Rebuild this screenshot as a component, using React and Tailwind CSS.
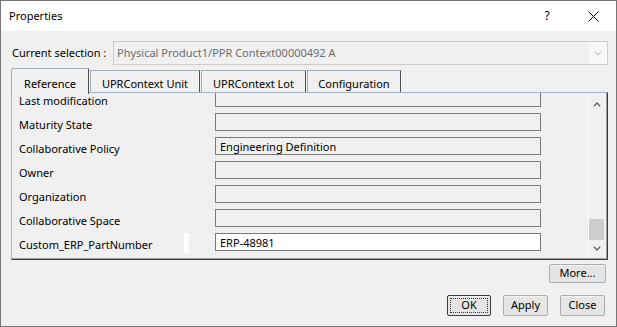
import React from "react";

const font = { fontFamily: '"Noto Sans", "Open Sans", sans-serif' };

function Chevron({ dir = "down", color = "#606060", w = 8, h = 5, sw = 1.3 }) {
  const d = dir === "down" ? "M0.8 0.8 L4 4 L7.2 0.8" : "M0.8 4.2 L4 1 L7.2 4.2";
  return (
    <svg width={w} height={h} viewBox="0 0 8 5" fill="none">
      <path d={d} stroke={color} strokeWidth={sw} />
    </svg>
  );
}

function Field({ value, white }) {
  return (
    <div
      className={
        "w-[326px] h-[18px] border border-[#7a7a7a] flex items-center pl-[4px] text-[11px] text-black leading-[15px] " +
        (white ? "bg-white" : "bg-[#f0f0f0]")
      }
    >
      {value}
    </div>
  );
}

function Row({ label, value, white, mark }) {
  return (
    <div className="flex items-start h-[24px] shrink-0">
      <div className="w-[172px] pl-[7px] pt-[4px] leading-[15px] text-[11px] text-black whitespace-nowrap">{label}</div>
      <div className="w-[5px] h-[20px]">{mark && <div className="w-[5px] h-[20px] bg-white" />}</div>
      <div className="w-[26px]" />
      <Field value={value} white={white} />
    </div>
  );
}

function Tab({ label, selected, w, first }) {
  return (
    <div
      className={
        "flex justify-center text-[11px] leading-[15px] text-black bg-[#f0f0f0] border-t border-l border-r border-t-[#a3aebb] border-l-[#a3aebb] border-r-[#505050] " +
        (selected ? "h-[26px] pt-[7px] relative z-10 rounded-tl-[2px] " : "h-[23px] pt-[5px] mt-[2px] ") +
        (first ? "" : "ml-[1px]")
      }
      style={{ width: w }}
    >
      {label}
    </div>
  );
}

function Button({ children, w, h, focused }) {
  return (
    <div
      className={
        "relative flex items-center justify-center text-[11px] text-black rounded-[2px] bg-[#e5e5e5] border " +
        (focused ? "border-[#3c3c3c]" : "border-[#adadad]")
      }
      style={{ width: w, height: h, boxShadow: "inset 0 1px 0 #f4f4f4" }}
    >
      {focused && <div className="absolute inset-[2px] border border-dotted border-[#333]" />}
      <span className="relative">{children}</span>
    </div>
  );
}

export default function App() {
  return (
    <div style={font} className="w-[617px] h-[327px] bg-[#f0f0f0] border border-[#767676] flex flex-col overflow-hidden">
      {/* Title bar */}
      <div className="h-[30px] bg-white flex items-center shrink-0">
        <div className="pl-[8px] text-[11px] text-black flex-1">Properties</div>
        <div className="w-[46px] h-full flex items-center justify-center text-[12px] text-black">?</div>
        <div className="w-[46px] h-full flex items-center justify-center">
          <svg width="11" height="11" viewBox="0 0 11 11">
            <path d="M0.5 0.5 L10.5 10.5 M10.5 0.5 L0.5 10.5" stroke="#000" strokeWidth="1" />
          </svg>
        </div>
      </div>

      <div className="flex flex-col pl-[10px] pr-[8px]">
        {/* Current selection */}
        <div className="flex items-center mt-[10px] h-[24px]">
          <div className="w-[102px] text-[11px] text-black pl-[1px] whitespace-nowrap">Current selection :</div>
          <div className="flex-1 h-[24px] border border-[#cccccc] bg-[#f0f0f0] flex items-stretch">
            <div className="flex-1 flex items-center pl-[3px] text-[11px] text-[#6d6d6d]">Physical Product1/PPR Context00000492 A</div>
            <div className="w-[18px] bg-[#f7f7f7] flex items-center justify-center">
              <Chevron dir="down" color="#a8a8a8" sw={1} />
            </div>
          </div>
        </div>

        {/* Tabs */}
        <div className="flex mt-[3px] h-[25px] items-start">
          <Tab label="Reference" selected w={78} first />
          <Tab label="UPRContext Unit" w={110} />
          <Tab label="UPRContext Lot" w={105} />
          <Tab label="Configuration" w={94} />
        </div>

        {/* Panel */}
        <div
          className="h-[168px] border border-t-[#a3b3c5] border-l-[#a3b3c5] border-b-[#3c3c3c] border-r-[#3c3c3c] flex -mt-[1px]"
          style={{ boxShadow: "inset -1px -1px 0 #a0a0a0" }}
        >
          <div className="flex-1 overflow-hidden">
            <div className="flex flex-col -mt-[4px]">
              <Row label="Last modification" value="" />
              <Row label="Maturity State" value="" />
              <Row label="Collaborative Policy" value="Engineering Definition" />
              <Row label="Owner" value="" />
              <Row label="Organization" value="" />
              <Row label="Collaborative Space" value="" />
              <Row label="Custom_ERP_PartNumber" value="ERP-48981" white mark />
            </div>
          </div>
          {/* Scrollbar */}
          <div className="w-[17px] mt-[3px] mb-[2px] mr-[2px] border-l border-white flex flex-col">
            <div className="h-[17px] flex items-center justify-center">
              <Chevron dir="up" />
            </div>
            <div className="flex-1 flex flex-col justify-end">
              <div className="h-[21px] bg-[#cdcdcd] mr-[1px]" />
            </div>
            <div className="h-[17px] flex items-center justify-center">
              <Chevron dir="down" />
            </div>
          </div>
        </div>

        {/* More */}
        <div className="flex justify-end mt-[4px] pr-[2px]">
          <Button w={57} h={19}>More...</Button>
        </div>

        {/* OK Apply Close */}
        <div className="flex justify-end mt-[12px] pr-[3px] gap-[12px]">
          <Button w={44} h={21} focused>OK</Button>
          <Button w={45} h={21}>Apply</Button>
          <Button w={45} h={21}>Close</Button>
        </div>
      </div>
    </div>
  );
}
